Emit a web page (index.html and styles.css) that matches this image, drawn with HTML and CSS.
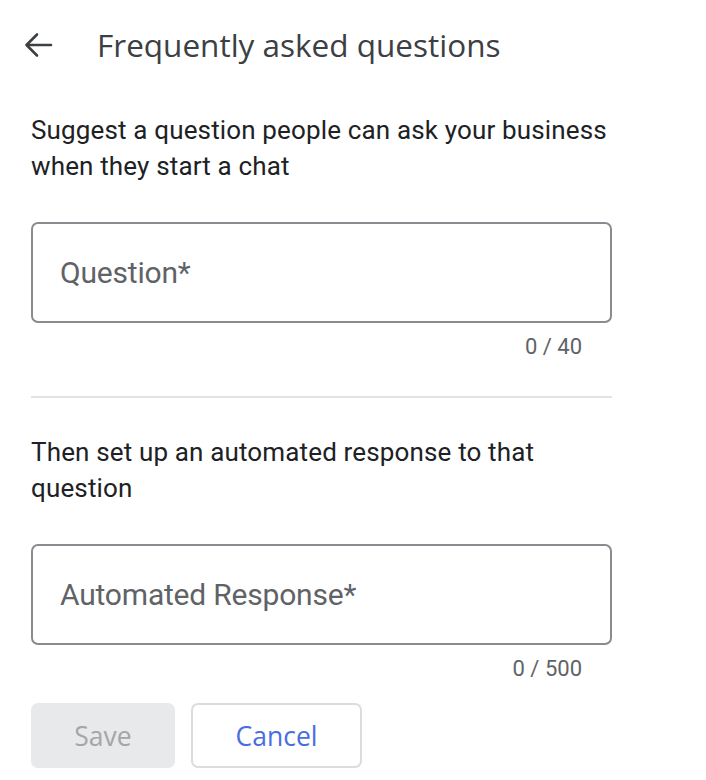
FILE: index.html
```html
<!DOCTYPE html>
<html lang="en">
<head>
<meta charset="utf-8">
<title>Frequently asked questions</title>
<link rel="stylesheet" href="styles.css">
</head>
<body>
<div class="page">
  <header class="header">
    <svg class="back" width="30" height="30" viewBox="0 0 30 30" aria-hidden="true">
      <path d="M28 15H3.5M14 4.5L3.5 15L14 25.5" fill="none" stroke="#3c4043" stroke-width="2.6" stroke-linecap="round" stroke-linejoin="round"/>
    </svg>
    <h1 class="title">Frequently asked questions</h1>
  </header>
  <main class="content">
    <p class="desc">Suggest a question people can ask your business when they start a chat</p>
    <div class="field"><span class="placeholder">Question*</span></div>
    <div class="counter">0 / 40</div>
    <hr class="divider">
    <p class="desc desc-second">Then set up an automated response to that question</p>
    <div class="field"><span class="placeholder">Automated Response*</span></div>
    <div class="counter">0 / 500</div>
    <div class="actions">
      <button class="btn btn-save" disabled>Save</button>
      <button class="btn btn-cancel">Cancel</button>
    </div>
  </main>
</div>
</body>
</html>
```
FILE: styles.css
```css
html, body {
  margin: 0;
  padding: 0;
  background: #ffffff;
}
body {
  font-family: Roboto, "Liberation Sans", sans-serif;
  color: #202124;
}
.page {
  width: 706px;
}
.header {
  display: flex;
  align-items: center;
  height: 90px;
  padding-left: 23px;
}
.back {
  flex: none;
  display: block;
}
.title {
  margin: 0 0 0 44px;
  font-family: "Open Sans", Roboto, sans-serif;
  font-weight: 400;
  font-size: 31.5px;
  line-height: 40px;
  color: #3c4043;
}
.content {
  width: 581px;
  margin-left: 31px;
}
.desc {
  margin: 22px 0 0;
  width: 600px;
  font-size: 26px;
  letter-spacing: 0.15px;
  line-height: 36px;
  color: #202124;
}
.desc-second {
  margin-top: 36px;
  width: 560px;
}
.field {
  box-sizing: border-box;
  margin-top: 38px;
  height: 101px;
  border: 2px solid #888b8f;
  border-radius: 7px;
  display: flex;
  align-items: center;
  padding-left: 27px;
}
.placeholder {
  font-size: 30px;
  color: #5f6368;
  letter-spacing: -0.2px;
}
.counter {
  margin-top: 10px;
  padding-right: 30px;
  text-align: right;
  font-size: 22px;
  line-height: 28px;
  color: #5f6368;
}
.divider {
  margin: 35px 0 0;
  border: 0;
  height: 2px;
  background: #e3e3e3;
}
.actions {
  display: flex;
  gap: 16px;
  margin-top: 20px;
}
.btn {
  box-sizing: border-box;
  height: 65px;
  border-radius: 7px;
  font-family: "Open Sans", Roboto, sans-serif;
  font-size: 26.5px;
  font-weight: 500;
  padding: 0;
}
.btn-save {
  width: 144px;
  background: #e8e9ea;
  border: 0;
  color: #a4a6a8;
}
.btn-cancel {
  width: 171px;
  background: #ffffff;
  border: 2px solid #dadce0;
  color: #4a6ee0;
}
```
